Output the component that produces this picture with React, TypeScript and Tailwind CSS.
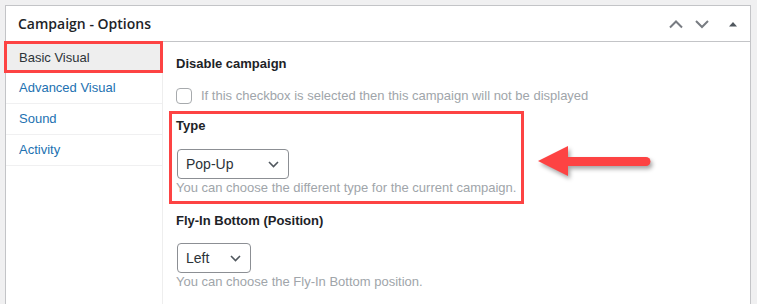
import { ReactNode } from 'react';

const tabs = ['Basic Visual', 'Advanced Visual', 'Sound', 'Activity'];

function Chevron({ up }: { up?: boolean }) {
  return (
    <svg width="16" height="10" viewBox="0 0 16 10" className="text-[#787c82]">
      <path
        d={up ? 'M2 8.5 L8 2.5 L14 8.5' : 'M2 2 L8 8 L14 2'}
        fill="none"
        stroke="currentColor"
        strokeWidth="2"
      />
    </svg>
  );
}

function Select({ value, width }: { value: string; width: string }) {
  return (
    <div
      className={`flex h-[30px] items-center justify-between rounded-[4px] border border-[#8c8f94] bg-white pl-[8px] pr-[9px] text-[14px] text-[#2c3338] ${width}`}
    >
      <span>{value}</span>
      <svg width="11" height="7" viewBox="0 0 11 7">
        <path d="M1 1 L5.5 5.5 L10 1" fill="none" stroke="#50575e" strokeWidth="1.6" />
      </svg>
    </div>
  );
}

function Field({ label, children }: { label: string; children: ReactNode }) {
  return (
    <div>
      <div className="text-[13px] leading-[20px] font-bold text-[#1d2327]">{label}</div>
      {children}
    </div>
  );
}

export default function App() {
  return (
    <div className="relative min-h-[304px] bg-[#f0f0f1] pt-[5px] pl-[5px] font-['Liberation_Sans',Arial,sans-serif]">
      <div className="w-[746px] border border-b-0 border-[#c3c4c7] bg-white">
        {/* header */}
        <div className="flex h-[36px] items-center justify-between border-b border-[#c3c4c7] pl-[12px] pr-[10px]">
          <h2 className="font-['Open_Sans',sans-serif] text-[14px] font-semibold text-[#1d2327]">
            Campaign - Options
          </h2>
          <div className="flex items-center">
            <span className="mr-[10px]">
              <Chevron up />
            </span>
            <span className="mr-[18px]">
              <Chevron />
            </span>
            <svg width="10" height="6" viewBox="0 0 10 6" className="mr-[2px]">
              <path d="M1 5.5 L5 1 L9 5.5 Z" fill="#50575e" />
            </svg>
          </div>
        </div>

        <div className="flex">
          {/* sidebar */}
          <ul className="w-[157px] shrink-0 border-r border-[#eeeeee]">
            {tabs.map((tab, i) => (
              <li
                key={tab}
                className={
                  i === 0
                    ? 'relative flex h-[31px] items-center bg-[#eeeeee] pl-[13px] text-[13px] text-[#2c3338]'
                    : 'flex h-[31px] items-center border-b border-[#f0f0f1] pl-[13px] text-[13px] text-[#2271b1]'
                }
              >
                {tab}
                {i === 0 && (
                  <span className="absolute top-[-1px] right-[-1px] bottom-0 left-[-2px] border-3 border-[#fd4343]" />
                )}
              </li>
            ))}
          </ul>

          {/* content */}
          <div className="flex-1 pt-[12px] pb-[20px] pl-[13px]">
            <Field label="Disable campaign">
              <label className="mt-[12px] flex h-[20px] items-center text-[13px] text-[#a0a5aa]">
                <span className="mr-[9px] h-[16px] w-[16px] rounded-[4px] border border-[#a7aaad] bg-white" />
                If this checkbox is selected then this campaign will not be displayed
              </label>
            </Field>

            <div className="mt-[5px] ml-[-7px] w-[355px] border-3 border-[#fd4343] pt-[2px] pb-[4px] pl-[4px]">
              <Field label="Type">
                <div className="mt-[13px] ml-[1px]">
                  <Select value="Pop-Up" width="w-[112px]" />
                </div>
                <p className="text-[13px] leading-[18px] text-[#a0a5aa]">
                  You can choose the different type for the current campaign.
                </p>
              </Field>
            </div>

            <div className="mt-[7px]">
              <Field label="Fly-In Bottom (Position)">
                <div className="mt-[12px] ml-[1px]">
                  <Select value="Left" width="w-[74px]" />
                </div>
                <p className="text-[13px] leading-[18px] text-[#a0a5aa]">
                  You can choose the Fly-In Bottom position.
                </p>
              </Field>
            </div>
          </div>
        </div>
      </div>

      {/* annotation arrow */}
      <svg
        width="130"
        height="50"
        viewBox="0 0 130 50"
        className="absolute top-[138px] left-[530px] drop-shadow-[2px_3px_2px_rgba(0,0,0,0.35)]"
      >
        <line x1="36" y1="23.5" x2="116" y2="23.5" stroke="#fd4343" strokeWidth="9" strokeLinecap="round" />
        <path d="M8 23 L38 8 L38 38 Z" fill="#fd4343" />
      </svg>
    </div>
  );
}
